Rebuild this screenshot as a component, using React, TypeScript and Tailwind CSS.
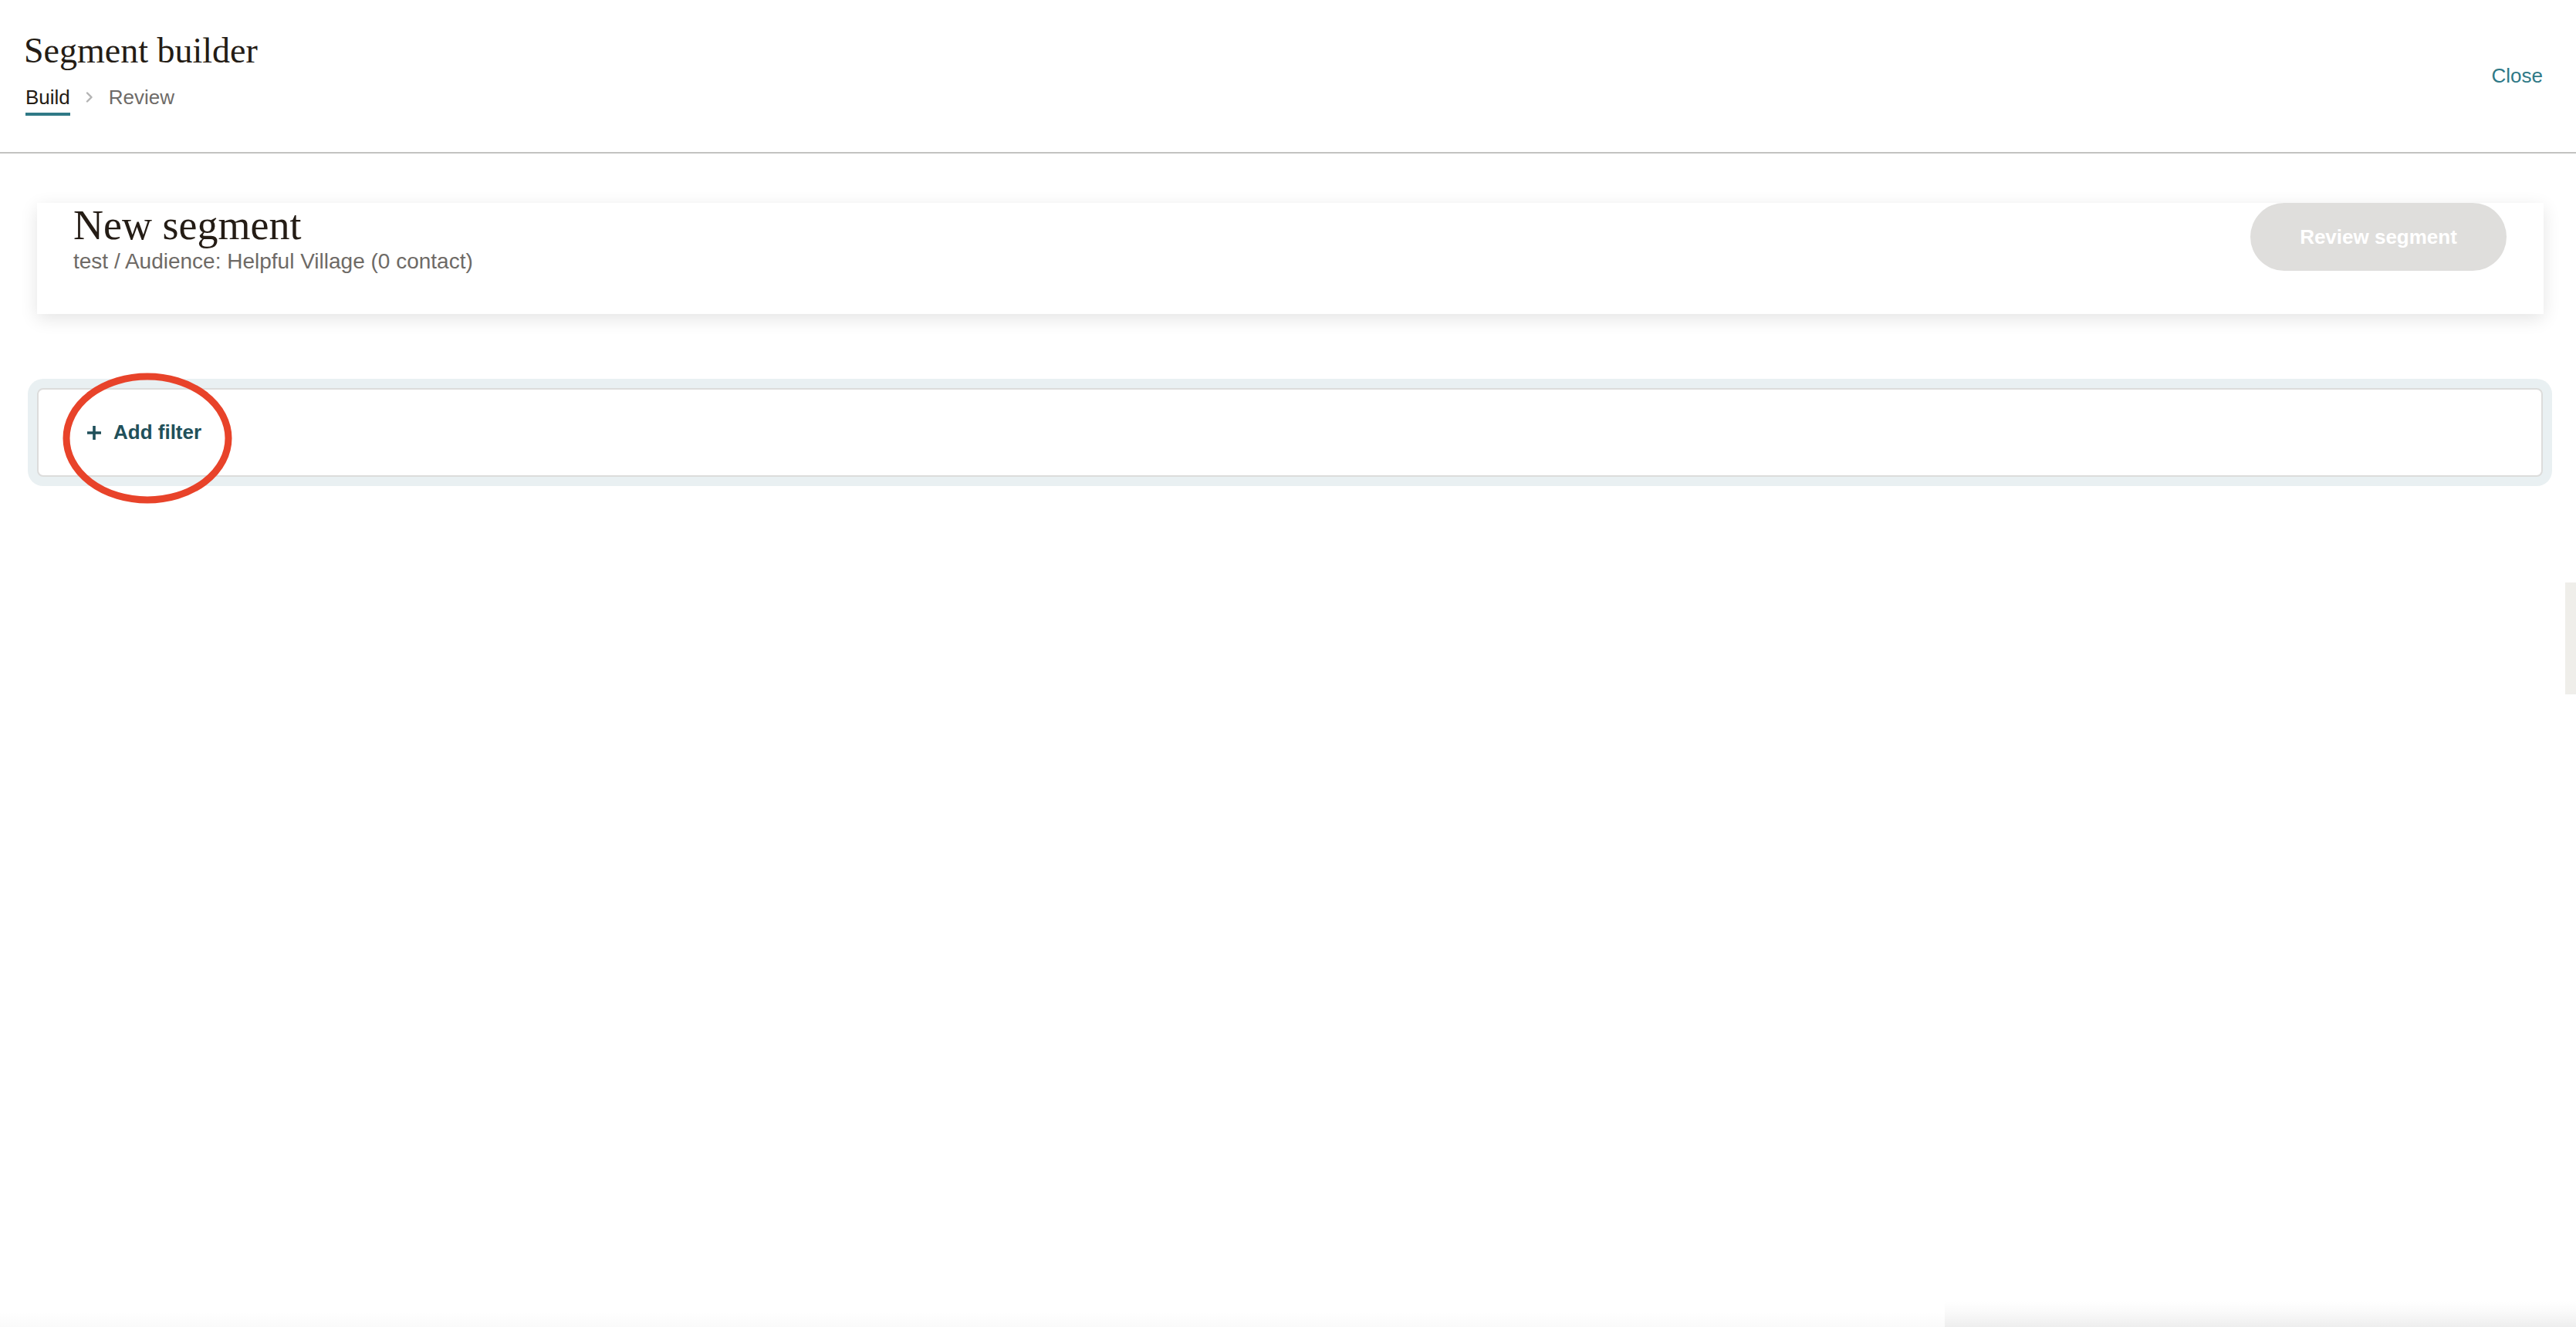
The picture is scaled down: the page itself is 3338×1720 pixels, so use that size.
import React from 'react';

const sans = "font-['Liberation_Sans',Arial,sans-serif]";
const serif = "font-['Liberation_Serif','Times_New_Roman',serif]";

const ChevronRight = () => (
  <svg width="10" height="14" viewBox="0 0 10 14" fill="none" className="mx-[20px]">
    <path d="M2 1.5L7.5 7L2 12.5" stroke="#b3b3b3" strokeWidth="2.4" strokeLinecap="round" strokeLinejoin="round" />
  </svg>
);

const Plus = () => (
  <svg width="20" height="20" viewBox="0 0 20 20" fill="none">
    <path d="M10 1v18M1 10h18" stroke="#1f4f5a" strokeWidth="3.6" />
  </svg>
);

const Header = () => (
  <header className="flex items-center justify-between border-b-2 border-[#c3c3c1] pl-[31px] pr-[43px] pt-[38px] pb-[47px]">
    <div>
      <h1 className={`${serif} text-[46px] leading-[56px] text-[#241c15]`}>Segment builder</h1>
      <nav className={`${sans} mt-[15px] flex items-center text-[26px] leading-[34px]`}>
        <div className="flex flex-col pl-[2px]">
          <span className="font-medium text-[#241c15]">Build</span>
          <span className="mt-[3px] h-[4px] w-full bg-[#2f7986]" />
        </div>
        <div className="-mt-[7px] flex items-center">
          <ChevronRight />
          <span className="text-[#6e6b68]">Review</span>
        </div>
      </nav>
    </div>
    <button className={`${sans} mt-[8px] text-[26px] text-[#2e7987]`}>Close</button>
  </header>
);

const SegmentCard = () => (
  <section className="ml-[48px] mr-[42px] mt-[64px] flex h-[144px] items-start justify-between bg-white pl-[47px] pr-[48px] shadow-[0_6px_22px_rgba(0,0,0,0.11)]">
    <div>
      <h2 className={`${serif} text-[54px] leading-[58px] text-[#241c15]`}>New segment</h2>
      <p className={`${sans} mt-[1px] text-[28px] leading-[34px] text-[#6e6a66]`}>
        test / Audience: Helpful Village (0 contact)
      </p>
    </div>
    <button
      disabled
      className={`${sans} h-[88px] w-[332px] rounded-full bg-[#dfdedc] text-[26px] font-semibold text-white`}
    >
      Review segment
    </button>
  </section>
);

const FilterBox = () => (
  <section className="ml-[36px] mr-[31px] mt-[84px] rounded-[20px] bg-[#e9f0f2] p-[12px]">
    <div className="flex h-[115px] items-center rounded-[8px] border-2 border-[#dcdcdb] bg-white pl-[62px]">
      <button className={`${sans} flex items-center gap-[15px] text-[26px] font-bold text-[#21505a]`}>
        <Plus />
        Add filter
      </button>
    </div>
  </section>
);

export default function App() {
  return (
    <div className="relative h-[1720px] w-full overflow-hidden bg-white">
      <Header />
      <SegmentCard />
      <FilterBox />

      {/* hand-drawn highlight around the add filter action */}
      <svg className="pointer-events-none absolute left-[80px] top-[482px]" width="222" height="172" viewBox="0 0 222 172">
        <ellipse cx="111" cy="86" rx="105" ry="80" fill="none" stroke="#e8432a" strokeWidth="9" />
      </svg>

      {/* side feedback tab peeking in */}
      <div className="absolute right-0 top-[755px] h-[145px] w-[14px] bg-[#efeeea]" />

      {/* bottom edge shading */}
      <div className="absolute bottom-0 left-0 right-0 h-[20px] bg-gradient-to-t from-black/[0.02] to-transparent" />
      <div className="absolute bottom-0 left-[2520px] right-0 h-[34px] bg-gradient-to-t from-black/[0.05] to-transparent" />
    </div>
  );
}
